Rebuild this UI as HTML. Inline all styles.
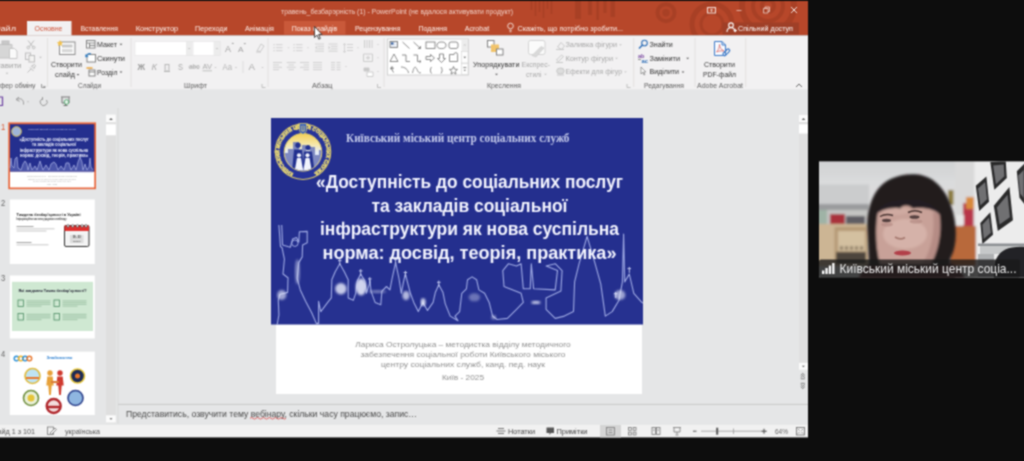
<!DOCTYPE html>
<html lang="uk"><head><meta charset="utf-8"><title>PowerPoint</title>
<style>
html,body{margin:0;padding:0;background:#0d0d0d;overflow:hidden}
svg{display:block;font-family:"Liberation Sans",sans-serif}
</style></head><body>
<svg width="1024" height="461" viewBox="0 0 1024 461">
<defs>
<filter id="soft" filterUnits="userSpaceOnUse" x="-20" y="-20" width="1064" height="501" color-interpolation-filters="sRGB"><feConvolveMatrix order="3" kernelMatrix="1 2 1 2 5 2 1 2 1" edgeMode="duplicate" preserveAlpha="true"/></filter>
<filter id="b1" x="-10%" y="-10%" width="120%" height="120%"><feGaussianBlur stdDeviation="1.2"/></filter>
<filter id="b2" x="-10%" y="-10%" width="120%" height="120%"><feGaussianBlur stdDeviation="2.5"/></filter>
<filter id="b05" x="-10%" y="-10%" width="120%" height="120%"><feGaussianBlur stdDeviation="0.5"/></filter>
<linearGradient id="wallg" x1="0" y1="0" x2="0" y2="1"><stop offset="0" stop-color="#cfd1d2"/><stop offset="0.350" stop-color="#dadbdc"/><stop offset="1" stop-color="#dedede"/></linearGradient>
<clipPath id="cam"><rect x="819" y="161.5" width="217" height="116"/></clipPath>
<clipPath id="win"><rect x="-12" y="0.8" width="820" height="436.800"/></clipPath>
<clipPath id="blue"><rect x="271" y="118" width="372" height="206.5"/></clipPath>
</defs>

<g filter="url(#soft)">
<rect x="-20.00" y="-20.00" width="1064.00" height="501.00" fill="#0d0d0d" />
<g clip-path="url(#win)">
<rect x="-12.00" y="1.00" width="820.00" height="34.50" fill="#b7472a" />
<g opacity="0.11" fill="none" stroke="#3a0d00">
<line x1="531.5" y1="1" x2="531.5" y2="10" stroke-width="1.600"/>
<line x1="535.5" y1="1" x2="535.5" y2="16" stroke-width="1.600"/>
<line x1="539.5" y1="1" x2="539.5" y2="12" stroke-width="1.600"/>
<line x1="543.5" y1="1" x2="543.5" y2="18" stroke-width="1.600"/>
<line x1="547.5" y1="1" x2="547.5" y2="9" stroke-width="1.600"/>
<line x1="551.5" y1="1" x2="551.5" y2="14" stroke-width="1.600"/>
<line x1="578" y1="1" x2="578" y2="19" stroke-width="6"/>
<line x1="590" y1="1" x2="590" y2="15" stroke-width="4"/>
<line x1="597.7" y1="1" x2="597.7" y2="20" stroke-width="2.6"/>
<line x1="605" y1="1" x2="605" y2="13" stroke-width="3"/>
<line x1="612.8" y1="1" x2="612.8" y2="17" stroke-width="4.4"/>
<circle cx="666" cy="12.700" r="8.500" stroke-width="4"/><circle cx="666" cy="12.700" r="2" stroke-width="3.500"/>
<circle cx="712" cy="24" r="20" stroke-width="5"/><circle cx="712" cy="24" r="11" stroke-width="3"/>
<circle cx="768" cy="6" r="26" stroke-width="6"/><circle cx="768" cy="6" r="15" stroke-width="4"/><circle cx="768" cy="6" r="6" stroke-width="4"/>
</g>
<text x="281.00" y="14.03" font-size="7.8" fill="#f0cfc5" textLength="232.00" lengthAdjust="spacingAndGlyphs" >травень_безбарэрність (1) - PowerPoint (не вдалося активувати продукт)</text>
<g stroke="#f6e3dd" fill="none" stroke-width="1">
<rect x="707.5" y="7.5" width="8" height="5.5"/><path d="M711.5 12v-3m-1.5 1.5l1.5-1.5l1.5 1.5" stroke-width="0.8"/>
<path d="M736.500 10.500h5" opacity="0.700"/>
<path d="M763.500 8.500h4.500v4.500h-4.500zM765 8.500v-1.500h4.500v4.500h-1.500" opacity="0.800" stroke-width="0.900"/>
<path d="M791 7l6 6m0-6l-6 6"/>
</g>
<rect x="27.00" y="21.00" width="44.50" height="14.50" fill="#f2f1f2" />
<rect x="284.00" y="21.00" width="61.50" height="13.50" fill="#c9593a" />
<rect x="722.50" y="22.50" width="76.50" height="12.00" fill="#9f3f27" />
<text x="-6.50" y="30.66" font-size="7.9" fill="#fdf1ec" textLength="22.50" lengthAdjust="spacingAndGlyphs" >Файл</text>
<text x="34.50" y="30.66" font-size="7.9" fill="#d0553a" textLength="28.00" lengthAdjust="spacingAndGlyphs" >Основне</text>
<text x="80.50" y="30.66" font-size="7.9" fill="#fdf1ec" textLength="37.50" lengthAdjust="spacingAndGlyphs" >Вставлення</text>
<text x="135.70" y="30.66" font-size="7.9" fill="#fdf1ec" textLength="42.50" lengthAdjust="spacingAndGlyphs" >Конструктор</text>
<text x="195.00" y="30.66" font-size="7.9" fill="#fdf1ec" textLength="32.50" lengthAdjust="spacingAndGlyphs" >Переходи</text>
<text x="245.00" y="30.66" font-size="7.9" fill="#fdf1ec" textLength="29.00" lengthAdjust="spacingAndGlyphs" >Анімація</text>
<text x="291.70" y="30.66" font-size="7.9" fill="#fdf1ec" textLength="45.50" lengthAdjust="spacingAndGlyphs" >Показ слайдів</text>
<text x="355.00" y="30.66" font-size="7.9" fill="#fdf1ec" textLength="45.50" lengthAdjust="spacingAndGlyphs" >Рецензування</text>
<text x="418.50" y="30.66" font-size="7.9" fill="#fdf1ec" textLength="28.50" lengthAdjust="spacingAndGlyphs" >Подання</text>
<text x="464.70" y="30.66" font-size="7.9" fill="#fdf1ec" textLength="24.50" lengthAdjust="spacingAndGlyphs" >Acrobat</text>
<g stroke="#f7e6e0" fill="none" stroke-width="0.9"><circle cx="510.5" cy="26" r="2.8"/><path d="M509.3 30.3h2.4M509.6 31.8h1.8"/></g>
<text x="517.50" y="30.66" font-size="7.9" fill="#fdf1ec" textLength="105.50" lengthAdjust="spacingAndGlyphs" >Скажіть, що потрібно зробити...</text>
<g stroke="#fff" fill="none" stroke-width="1.1"><circle cx="731" cy="25.2" r="2.3"/><path d="M727 32c0-3 1.8-4.3 4-4.3s4 1.3 4 4.300"/><path d="M733.5 30.500h3.5M735.2 28.800v3.400" stroke-width="0.9"/></g>
<text x="738.00" y="30.66" font-size="7.9" fill="#ffffff" textLength="55.00" lengthAdjust="spacingAndGlyphs" >Спільний доступ</text>
<rect x="-12.00" y="35.30" width="820.00" height="55.00" fill="#f2f1f2" />
<line x1="47.50" y1="38.00" x2="47.50" y2="87.00" stroke="#e1dfdd" stroke-width="0.9" />
<line x1="131.00" y1="38.00" x2="131.00" y2="87.00" stroke="#e1dfdd" stroke-width="0.9" />
<line x1="268.00" y1="38.00" x2="268.00" y2="87.00" stroke="#e1dfdd" stroke-width="0.9" />
<line x1="384.00" y1="38.00" x2="384.00" y2="87.00" stroke="#e1dfdd" stroke-width="0.9" />
<line x1="633.70" y1="38.00" x2="633.70" y2="87.00" stroke="#e1dfdd" stroke-width="0.9" />
<line x1="695.00" y1="38.00" x2="695.00" y2="87.00" stroke="#e1dfdd" stroke-width="0.9" />
<line x1="745.70" y1="38.00" x2="745.70" y2="87.00" stroke="#e1dfdd" stroke-width="0.9" />
<g fill="none" stroke="#bdbdbd" stroke-width="1">
<path d="M-2 44.5h14v13.500h-14z" fill="#d6d6d6" stroke="#c4c4c4"/><rect x="2" y="41" width="7" height="3.500" fill="#c9c9c9" stroke="#bdbdbd"/>
<path d="M9.500 48.500h5l2.500 2.500v7.500h-7.500z" fill="#fafafa" stroke="#c6c6c6"/>
<path d="M28 40.500l5 6.500M34 40.500l-5 6.500"/><circle cx="28.300" cy="47.500" r="1.300"/><circle cx="33.700" cy="47.500" r="1.300"/>
<rect x="25.500" y="53" width="5" height="6.500"/><rect x="29" y="55.500" width="5.500" height="6.500" fill="#f3f2f1"/>
<path d="M27.500 72.500l3.500-3.500M30 67.500l3.500 3.500M31.500 66l3-1.500l1 1l-1.500 3z" />
</g>
<path d="M39.10 56.80h2.80l-1.40 1.40z" fill="#bdbdbd" stroke="none" stroke-width="1" />
<text x="-12.50" y="67.69" font-size="7.7" fill="#a2a2a2" textLength="34.00" lengthAdjust="spacingAndGlyphs" >Вставити</text>
<path d="M5.60 72.80h2.80l-1.40 1.40z" fill="#bdbdbd" stroke="none" stroke-width="1" />
<text x="-8.00" y="87.59" font-size="7.7" fill="#5c5c5c" textLength="43.50" lengthAdjust="spacingAndGlyphs" >Буфер обміну</text>
<path d="M41.500 84v3.500h3.500M43 85.500l2 2v-1.600M45 87.500h-1.600" stroke="#777" fill="none" stroke-width="0.7"/>
<rect x="59.500" y="42" width="15.500" height="12.500" fill="#fdfdfd" stroke="#8a8a8a" stroke-width="1"/>
<rect x="62.00" y="44.50" width="10.50" height="3.00" fill="#c8c8c8" />
<rect x="62.00" y="49.00" width="10.50" height="3.30" fill="#d8d8d8" />
<path d="M60 38.500l1 2l2.200.3l-1.600 1.500l.4 2.200l-2-1.100l-2 1.100l.4-2.200l-1.600-1.500l2.200-.3z" fill="#f2c14e" transform="translate(0,1.500)"/>
<text x="66.50" y="67.09" font-size="7.7" fill="#363636" text-anchor="middle" textLength="31.00" lengthAdjust="spacingAndGlyphs" >Створити</text>
<text x="55.00" y="77.09" font-size="7.7" fill="#363636" textLength="20.00" lengthAdjust="spacingAndGlyphs" >слайд</text>
<path d="M76.60 74.10h2.80l-1.40 1.40z" fill="#555" stroke="none" stroke-width="1" />
<g fill="none" stroke="#777" stroke-width="0.9"><rect x="86.500" y="40.500" width="8.500" height="7.500" fill="#fff"/><path d="M86.500 43h8.500M89.500 43v5M89.500 45.500h5.500"/></g>
<text x="97.00" y="46.90" font-size="7.7" fill="#363636" textLength="20.00" lengthAdjust="spacingAndGlyphs" >Макет</text>
<path d="M119.60 43.80h2.80l-1.40 1.40z" fill="#555" stroke="none" stroke-width="1" />
<g fill="none" stroke="#777" stroke-width="0.9"><rect x="87" y="54.500" width="8.500" height="7.500" fill="#fff"/><path d="M86 57a3.500 3.500 0 0 1 5-3" stroke="#2b7bc4" stroke-width="1.200"/><path d="M85.200 54.200l.5 3.200l3-.8z" fill="#2b7bc4" stroke="none"/></g>
<text x="97.00" y="60.70" font-size="7.7" fill="#363636" textLength="28.00" lengthAdjust="spacingAndGlyphs" >Скинути</text>
<g fill="none" stroke="#777" stroke-width="0.9"><rect x="89" y="70" width="6" height="6" fill="#fff"/><path d="M89 72h6"/><path d="M86.500 68h6" stroke="#e8a33a" stroke-width="1.500"/></g>
<text x="97.00" y="74.69" font-size="7.7" fill="#363636" textLength="20.50" lengthAdjust="spacingAndGlyphs" >Розділ</text>
<path d="M119.60 71.60h2.80l-1.40 1.40z" fill="#555" stroke="none" stroke-width="1" />
<text x="78.00" y="87.59" font-size="7.7" fill="#5c5c5c" textLength="23.00" lengthAdjust="spacingAndGlyphs" >Слайди</text>
<rect x="135.00" y="41.50" width="51.00" height="14.00" fill="#ffffff" />
<rect x="186.00" y="41.50" width="6.50" height="14.00" fill="#ececec" />
<path d="M187.90 48.05h2.60l-1.30 1.30z" fill="#c0c0c0" stroke="none" stroke-width="1" />
<rect x="193.70" y="41.50" width="20.00" height="14.00" fill="#ffffff" />
<rect x="213.70" y="41.50" width="6.50" height="14.00" fill="#ececec" />
<path d="M215.70 48.05h2.60l-1.30 1.30z" fill="#c0c0c0" stroke="none" stroke-width="1" />
<rect x="135" y="41.500" width="85.200" height="14" fill="none" stroke="#e3e3e3" stroke-width="0.6"/>
<text x="225.00" y="51.65" font-size="9" fill="#a2a2a2" textLength="6.00" lengthAdjust="spacingAndGlyphs" >A</text>
<path d="M231.5 44l1.300-1.500l1.300 1.500z" fill="#a2a2a2" stroke="none" stroke-width="1" />
<text x="238.00" y="51.80" font-size="8" fill="#a2a2a2" textLength="5.50" lengthAdjust="spacingAndGlyphs" >A</text>
<path d="M243.500 43l1.300 1.500l1.300-1.500z" fill="#a2a2a2" stroke="none" stroke-width="1" />
<path d="M257 51l4-7l3 2l-3.500 5.500zM256 52h5" stroke="#c6c6c6" fill="none" stroke-width="0.9"/>
<text x="137.50" y="69.77" font-size="8.5" fill="#999" font-weight="bold" textLength="7.50" lengthAdjust="spacingAndGlyphs" >Ж</text>
<text x="151.50" y="69.77" font-size="8.5" fill="#aaa" textLength="5.50" lengthAdjust="spacingAndGlyphs" font-style="italic" >К</text>
<text x="164.00" y="69.77" font-size="8.5" fill="#aaa" textLength="6.00" lengthAdjust="spacingAndGlyphs" text-decoration="underline">П</text>
<line x1="164.00" y1="71.30" x2="170.00" y2="71.30" stroke="#aaa" stroke-width="0.8" />
<text x="178.00" y="69.77" font-size="8.5" fill="#aaa" textLength="5.00" lengthAdjust="spacingAndGlyphs" >S</text>
<text x="189.00" y="69.42" font-size="7.5" fill="#aaa" textLength="10.50" lengthAdjust="spacingAndGlyphs" >abc</text>
<line x1="188.50" y1="67.00" x2="200.00" y2="67.00" stroke="#aaa" stroke-width="0.7" />
<text x="202.50" y="68.62" font-size="7.5" fill="#aaa" textLength="9.50" lengthAdjust="spacingAndGlyphs" >AV</text>
<line x1="202.50" y1="70.80" x2="212.00" y2="70.80" stroke="#aaa" stroke-width="0.7" />
<path d="M214.30 66.90h2.40l-1.20 1.20z" fill="#bbb" stroke="none" stroke-width="1" />
<text x="222.50" y="69.77" font-size="8.5" fill="#b4b4b4" textLength="9.50" lengthAdjust="spacingAndGlyphs" >Aa</text>
<path d="M234.80 66.90h2.40l-1.20 1.20z" fill="#bbb" stroke="none" stroke-width="1" />
<line x1="243.00" y1="61.00" x2="243.00" y2="73.00" stroke="#dcdcdc" stroke-width="1" />
<text x="248.50" y="69.95" font-size="9" fill="#aaa" textLength="6.50" lengthAdjust="spacingAndGlyphs" >A</text>
<path d="M261.30 66.90h2.40l-1.20 1.20z" fill="#bbb" stroke="none" stroke-width="1" />
<text x="184.00" y="87.59" font-size="7.7" fill="#5c5c5c" textLength="23.00" lengthAdjust="spacingAndGlyphs" >Шрифт</text>
<path d="M262 84v3.500h3.500" stroke="#aaa" fill="none" stroke-width="0.7"/>
<rect x="273.50" y="44.10" width="1.20" height="1.20" fill="#cdcdcd" />
<line x1="276.00" y1="44.70" x2="282.50" y2="44.70" stroke="#cdcdcd" stroke-width="0.9" />
<rect x="273.50" y="47.10" width="1.20" height="1.20" fill="#cdcdcd" />
<line x1="276.00" y1="47.70" x2="282.50" y2="47.70" stroke="#cdcdcd" stroke-width="0.9" />
<rect x="273.50" y="50.10" width="1.20" height="1.20" fill="#cdcdcd" />
<line x1="276.00" y1="50.70" x2="282.50" y2="50.70" stroke="#cdcdcd" stroke-width="0.9" />
<path d="M287.30 47.40h2.40l-1.20 1.20z" fill="#ccc" stroke="none" stroke-width="1" />
<rect x="293.50" y="44.10" width="1.20" height="1.20" fill="#cdcdcd" />
<line x1="296.00" y1="44.70" x2="302.50" y2="44.70" stroke="#cdcdcd" stroke-width="0.9" />
<rect x="293.50" y="47.10" width="1.20" height="1.20" fill="#cdcdcd" />
<line x1="296.00" y1="47.70" x2="302.50" y2="47.70" stroke="#cdcdcd" stroke-width="0.9" />
<rect x="293.50" y="50.10" width="1.20" height="1.20" fill="#cdcdcd" />
<line x1="296.00" y1="50.70" x2="302.50" y2="50.70" stroke="#cdcdcd" stroke-width="0.9" />
<path d="M306.80 47.40h2.40l-1.20 1.20z" fill="#ccc" stroke="none" stroke-width="1" />
<line x1="315.00" y1="44.00" x2="324.00" y2="44.00" stroke="#cdcdcd" stroke-width="0.9" />
<line x1="315.00" y1="46.40" x2="324.00" y2="46.40" stroke="#cdcdcd" stroke-width="0.9" />
<line x1="315.00" y1="48.80" x2="324.00" y2="48.80" stroke="#cdcdcd" stroke-width="0.9" />
<line x1="315.00" y1="51.20" x2="324.00" y2="51.20" stroke="#cdcdcd" stroke-width="0.9" />
<rect x="315.00" y="45.50" width="2.50" height="3.50" fill="#f2f1f2" />
<path d="M317 46l-2 1.500l2 1.500z" fill="#cdcdcd" stroke="none" stroke-width="1" />
<line x1="328.50" y1="44.00" x2="337.50" y2="44.00" stroke="#cdcdcd" stroke-width="0.9" />
<line x1="328.50" y1="46.40" x2="337.50" y2="46.40" stroke="#cdcdcd" stroke-width="0.9" />
<line x1="328.50" y1="48.80" x2="337.50" y2="48.80" stroke="#cdcdcd" stroke-width="0.9" />
<line x1="328.50" y1="51.20" x2="337.50" y2="51.20" stroke="#cdcdcd" stroke-width="0.9" />
<rect x="328.50" y="45.50" width="2.50" height="3.50" fill="#f2f1f2" />
<path d="M328.5 46l2 1.500l-2 1.500z" fill="#cdcdcd" stroke="none" stroke-width="1" />
<line x1="347.00" y1="44.50" x2="353.00" y2="44.50" stroke="#cdcdcd" stroke-width="0.9" />
<line x1="347.00" y1="47.50" x2="353.00" y2="47.50" stroke="#cdcdcd" stroke-width="0.9" />
<line x1="347.00" y1="50.50" x2="353.00" y2="50.50" stroke="#cdcdcd" stroke-width="0.9" />
<path d="M344.500 43.500v9M343 45l1.500-1.500l1.500 1.500M343 51l1.500 1.500l1.500-1.500" fill="none" stroke="#cdcdcd" stroke-width="0.8" />
<path d="M356.80 47.40h2.40l-1.20 1.20z" fill="#ccc" stroke="none" stroke-width="1" />
<g stroke="#c8c8c8" fill="none" stroke-width="0.9"><path d="M364.500 40v8M367 40v8M369.500 40v8M372 40v8"/><path d="M363.500 54h9v7.500h-9zM366 57.800h4M368 55.800v4"/><path d="M364 68h5v3h-5z" fill="#c9c9c9"/><path d="M367 72h6v4.500h-6z" fill="#fff"/></g>
<path d="M376.80 43.90h2.40l-1.20 1.20z" fill="#ccc" stroke="none" stroke-width="1" />
<path d="M376.80 57.40h2.40l-1.20 1.20z" fill="#ccc" stroke="none" stroke-width="1" />
<path d="M376.80 70.90h2.40l-1.20 1.20z" fill="#ccc" stroke="none" stroke-width="1" />
<line x1="273.00" y1="62.50" x2="282.00" y2="62.50" stroke="#cdcdcd" stroke-width="0.9" />
<line x1="273.00" y1="64.90" x2="279.00" y2="64.90" stroke="#cdcdcd" stroke-width="0.9" />
<line x1="273.00" y1="67.30" x2="282.00" y2="67.30" stroke="#cdcdcd" stroke-width="0.9" />
<line x1="273.00" y1="69.70" x2="279.00" y2="69.70" stroke="#cdcdcd" stroke-width="0.9" />
<line x1="286.70" y1="62.50" x2="295.70" y2="62.50" stroke="#cdcdcd" stroke-width="0.9" />
<line x1="300.00" y1="62.50" x2="309.00" y2="62.50" stroke="#cdcdcd" stroke-width="0.9" />
<line x1="288.45" y1="64.90" x2="293.95" y2="64.90" stroke="#cdcdcd" stroke-width="0.9" />
<line x1="303.50" y1="64.90" x2="309.00" y2="64.90" stroke="#cdcdcd" stroke-width="0.9" />
<line x1="286.70" y1="67.30" x2="295.70" y2="67.30" stroke="#cdcdcd" stroke-width="0.9" />
<line x1="300.00" y1="67.30" x2="309.00" y2="67.30" stroke="#cdcdcd" stroke-width="0.9" />
<line x1="288.45" y1="69.70" x2="293.95" y2="69.70" stroke="#cdcdcd" stroke-width="0.9" />
<line x1="303.50" y1="69.70" x2="309.00" y2="69.70" stroke="#cdcdcd" stroke-width="0.9" />
<line x1="313.00" y1="62.50" x2="322.00" y2="62.50" stroke="#cdcdcd" stroke-width="0.9" />
<line x1="313.00" y1="64.90" x2="322.00" y2="64.90" stroke="#cdcdcd" stroke-width="0.9" />
<line x1="313.00" y1="67.30" x2="322.00" y2="67.30" stroke="#cdcdcd" stroke-width="0.9" />
<line x1="313.00" y1="69.70" x2="322.00" y2="69.70" stroke="#cdcdcd" stroke-width="0.9" />
<line x1="331.00" y1="62.50" x2="335.00" y2="62.50" stroke="#cdcdcd" stroke-width="0.9" />
<line x1="331.00" y1="64.90" x2="335.00" y2="64.90" stroke="#cdcdcd" stroke-width="0.9" />
<line x1="331.00" y1="67.30" x2="335.00" y2="67.30" stroke="#cdcdcd" stroke-width="0.9" />
<line x1="331.00" y1="69.70" x2="335.00" y2="69.70" stroke="#cdcdcd" stroke-width="0.9" />
<line x1="336.50" y1="62.50" x2="340.50" y2="62.50" stroke="#cdcdcd" stroke-width="0.9" />
<line x1="336.50" y1="64.90" x2="340.50" y2="64.90" stroke="#cdcdcd" stroke-width="0.9" />
<line x1="336.50" y1="67.30" x2="340.50" y2="67.30" stroke="#cdcdcd" stroke-width="0.9" />
<line x1="336.50" y1="69.70" x2="340.50" y2="69.70" stroke="#cdcdcd" stroke-width="0.9" />
<path d="M344.80 65.90h2.40l-1.20 1.20z" fill="#ccc" stroke="none" stroke-width="1" />
<text x="312.00" y="87.59" font-size="7.7" fill="#5c5c5c" textLength="20.50" lengthAdjust="spacingAndGlyphs" >Абзац</text>
<path d="M377.500 84v3.500h3.500" stroke="#aaa" fill="none" stroke-width="0.7"/>
<rect x="387.500" y="39" width="81" height="36" fill="#ffffff" stroke="#c9c9c9" stroke-width="0.8"/>
<rect x="461.50" y="39.40" width="6.60" height="11.50" fill="#ececec" />
<rect x="461.500" y="51.500" width="6.600" height="11.500" fill="#fdfdfd" stroke="#d0d0d0" stroke-width="0.6"/><rect x="461.500" y="63.500" width="6.600" height="11" fill="#fdfdfd" stroke="#d0d0d0" stroke-width="0.6"/>
<path d="M463.300 45.500l1.500-1.500l1.500 1.500z" fill="#c9c9c9" stroke="none" stroke-width="1" />
<path d="M463.50 56.85h2.60l-1.30 1.30z" fill="#555" stroke="none" stroke-width="1" />
<path d="M463.50 69.65h2.60l-1.30 1.30z" fill="#555" stroke="none" stroke-width="1" />
<line x1="463.30" y1="67.50" x2="466.30" y2="67.50" stroke="#555" stroke-width="0.7" />
<g stroke="#707070" fill="none" stroke-width="0.8">
<rect x="390" y="41.500" width="7.500" height="6" fill="#e9eef6" stroke="#666"/><rect x="391" y="42.500" width="2.500" height="2" fill="#2b579a" stroke="none"/>
<path d="M402.500 42l7 6.500"/><path d="M413.500 42l7 6.500M420.500 48.500v-2.500M420.500 48.500h-2.500"/>
<rect x="426" y="42" width="9" height="6.500"/><ellipse cx="441.500" cy="45.300" rx="4.500" ry="3.300"/><rect x="449" y="42" width="9" height="6.500" rx="2"/>
<path d="M394 54l4 7.500h-8z"/><path d="M402 55h4v6.500h4"/><path d="M413.500 55h4v6.500h3.500M421 61.500l-1.500-1.300M421 61.500l-1.500 1.300"/>
<path d="M426 56.500h4.500v-2l4 3.500l-4 3.500v-2h-4.500z"/><path d="M439.500 54h4v4.500h2l-4 4l-4-4h2z"/><path d="M449.500 54.500h4.500a1.800 1.800 0 0 1 3.600 0v7h-8.100z"/>
<path d="M391 67.500l2.500 5M392 66.500l-1.500 2.500l3-.5z"/><path d="M401 67c4 0 7 2.500 7.500 6"/><path d="M412.500 73c1.500-7 3-7 4.500-3.500s2.500 3.800 4 3"/><path d="M431.500 67c-1.500 2-1.500 4.500 0 6.500"/><path d="M441 67c1.500 2 1.500 4.500 0 6.500"/>
<path d="M453.500 66.500l1.100 2.700l2.900.2l-2.200 1.900l.7 2.800l-2.500-1.500l-2.500 1.500l.7-2.800l-2.200-1.900l2.900-.2z"/>
</g>
<rect x="487.500" y="40.500" width="6.500" height="6.500" fill="#fff" stroke="#777" stroke-width="0.9"/><rect x="491" y="44.500" width="8" height="7.500" fill="#f2c46b"/><rect x="496.500" y="49" width="6.500" height="6" fill="#fff" stroke="#777" stroke-width="0.9"/>
<text x="473.00" y="67.19" font-size="7.7" fill="#363636" textLength="46.50" lengthAdjust="spacingAndGlyphs" >Упорядкувати</text>
<path d="M495.10 73.80h2.80l-1.40 1.40z" fill="#555" stroke="none" stroke-width="1" />
<text x="487.00" y="87.59" font-size="7.7" fill="#5c5c5c" textLength="34.00" lengthAdjust="spacingAndGlyphs" >Креслення</text>
<rect x="528.500" y="40.500" width="16.500" height="14" rx="2" fill="#fbfbfb" stroke="#cfcfcf" stroke-width="0.9"/><path d="M532 55.500l9-9l3 1.500l-8 9z" fill="#d9d9d9" stroke="#c9c9c9" stroke-width="0.6"/>
<text x="521.50" y="67.19" font-size="7.7" fill="#a8a8a8" textLength="28.50" lengthAdjust="spacingAndGlyphs" >Експрес-</text>
<text x="526.00" y="76.69" font-size="7.7" fill="#a8a8a8" textLength="15.50" lengthAdjust="spacingAndGlyphs" >стилі</text>
<path d="M544.20 73.85h2.60l-1.30 1.30z" fill="#c0c0c0" stroke="none" stroke-width="1" />
<g stroke="#c4c4c4" fill="none" stroke-width="0.9"><path d="M557.500 47l3.500-4.500l3.500 3.500l-3 3.500zM556 49.500h8"/><path d="M556.500 60l5-5l2 1.500l-5 5zM556 62.500h7"/><ellipse cx="560.500" cy="71" rx="3.800" ry="3" fill="#ddd"/><path d="M557 75h7"/></g>
<text x="565.50" y="47.20" font-size="7.7" fill="#a8a8a8" textLength="51.50" lengthAdjust="spacingAndGlyphs" >Заливка фігури</text>
<path d="M619.20 44.35h2.60l-1.30 1.30z" fill="#c0c0c0" stroke="none" stroke-width="1" />
<text x="565.50" y="60.70" font-size="7.7" fill="#a8a8a8" textLength="47.50" lengthAdjust="spacingAndGlyphs" >Контур фігури</text>
<path d="M615.20 57.85h2.60l-1.30 1.30z" fill="#c0c0c0" stroke="none" stroke-width="1" />
<text x="565.50" y="74.39" font-size="7.7" fill="#a8a8a8" textLength="56.50" lengthAdjust="spacingAndGlyphs" >Ефекти для фігур</text>
<path d="M624.20 71.55h2.60l-1.30 1.30z" fill="#c0c0c0" stroke="none" stroke-width="1" />
<path d="M627 84v3.500h3.500" stroke="#aaa" fill="none" stroke-width="0.7"/>
<g fill="none" stroke-width="1.100"><circle cx="644.500" cy="43" r="2.800" stroke="#2b6cb5"/><path d="M642.500 45l-3.500 3.500" stroke="#2b6cb5" stroke-width="1.400"/></g>
<text x="649.50" y="47.20" font-size="7.7" fill="#2e2e2e" textLength="23.20" lengthAdjust="spacingAndGlyphs" >Знайти</text>
<text x="638.00" y="58.10" font-size="6" fill="#7a4aa0" font-weight="bold" textLength="6.50" lengthAdjust="spacingAndGlyphs" >ab</text>
<text x="641.50" y="63.10" font-size="6" fill="#2b6cb5" font-weight="bold" textLength="6.50" lengthAdjust="spacingAndGlyphs" >ac</text>
<path d="M638 59.500h3" fill="none" stroke="#666" stroke-width="0.7" />
<text x="649.50" y="60.70" font-size="7.7" fill="#2e2e2e" textLength="30.50" lengthAdjust="spacingAndGlyphs" >Замінити</text>
<path d="M686.30 57.80h2.80l-1.40 1.40z" fill="#555" stroke="none" stroke-width="1" />
<path d="M641 67v7l1.700-1.600l1.300 2.600l.9-.4l-1.300-2.600h2.200z" fill="#fff" stroke="#777" stroke-width="0.7" />
<text x="649.50" y="74.39" font-size="7.7" fill="#2e2e2e" textLength="29.50" lengthAdjust="spacingAndGlyphs" >Виділити</text>
<path d="M681.60 71.50h2.80l-1.40 1.40z" fill="#555" stroke="none" stroke-width="1" />
<text x="644.00" y="87.59" font-size="7.7" fill="#5c5c5c" textLength="40.00" lengthAdjust="spacingAndGlyphs" >Редагування</text>
<g fill="none" stroke="#3b78c6" stroke-width="1"><path d="M714.500 41.500h7.500l3.500 3.500v10.500h-11z" fill="#f7faff"/><path d="M722 41.500v3.500h3.500" /><path d="M716.500 52c2-2 3-5 3-7.500c0 3 2 5.500 4.500 6.500c-3-.3-5.500 0-7.500 1z" stroke="#d9534f" stroke-width="0.700"/><path d="M724 52.500l3-3a1.500 1.500 0 0 1 2.200 2.200l-3.500 3.500a1.500 1.500 0 0 1-2.200-2.200z" stroke-width="1.200"/></g>
<text x="719.50" y="67.19" font-size="7.7" fill="#363636" text-anchor="middle" textLength="31.00" lengthAdjust="spacingAndGlyphs" >Створити</text>
<text x="719.50" y="76.89" font-size="7.7" fill="#363636" text-anchor="middle" textLength="33.00" lengthAdjust="spacingAndGlyphs" >PDF-файл</text>
<text x="697.00" y="87.59" font-size="7.7" fill="#5c5c5c" textLength="46.00" lengthAdjust="spacingAndGlyphs" >Adobe Acrobat</text>
<path d="M796 87l3-3l3 3" fill="none" stroke="#666" stroke-width="1" />
<rect x="-12.00" y="89.30" width="820.00" height="336.00" fill="#e5e6e7" />
<g fill="none" stroke="#8a8a8a" stroke-width="1">
<path d="M-3 97h5.500v8.500h-5.500z" stroke="#6a3fa0" stroke-width="1.200"/>
<path d="M16 99.500c5-2 8 0 7.500 5M16 99.500l3-2.500M16 99.500l3.500 1.800" stroke="#9a9a9a"/>
<path d="M46.500 100a3.500 3.500 0 1 1-4.500-1M42.500 97v3" stroke="#9a9a9a"/>
<path d="M61 97h9M62 97.500v5.500h7v-5.500M65.500 103v2.500M63.500 105.500h4" stroke="#666" stroke-width="0.9"/><circle cx="66.500" cy="102" r="2.300" stroke="#3a9a5a" fill="#e6f4ea" stroke-width="0.8"/>
</g>
<path d="M26.80 101.40h2.40l-1.20 1.20z" fill="#aaa" stroke="none" stroke-width="1" />
<rect x="106.00" y="114.50" width="10.00" height="309.00" fill="#dfdfdf" />
<line x1="118.00" y1="108.00" x2="118.00" y2="424.00" stroke="#d6d6d6" stroke-width="0.8" />
<rect x="106.00" y="114.50" width="9.80" height="7.70" fill="#fbfbfb" />
<path d="M109.200 120l1.800-2l1.800 2z" fill="#555" stroke="none" stroke-width="1" />
<rect x="106.00" y="124.30" width="9.80" height="11.00" fill="#ffffff" />
<rect x="106.00" y="415.30" width="9.80" height="7.20" fill="#fbfbfb" />
<path d="M109.50 418.25h3.00l-1.50 1.50z" fill="#555" stroke="none" stroke-width="1" />
<rect x="8.30" y="122.40" width="87.70" height="66.80" fill="#e8653a" />
<rect x="10.00" y="124.20" width="84.30" height="47.60" fill="#242f8e" />
<rect x="10.00" y="171.80" width="84.30" height="15.70" fill="#ffffff" />
<circle cx="16.500" cy="131.500" r="4.800" fill="#9fb4d8" stroke="#d9c25a" stroke-width="1"/>
<text x="52.00" y="129.77" font-size="2.2" fill="#c9cfee" text-anchor="middle" textLength="48.00" lengthAdjust="spacingAndGlyphs" >Київський міський центр соціальних служб</text>
<text x="54.00" y="140.91" font-size="4.6" fill="#f0f2ff" font-weight="bold" text-anchor="middle" textLength="69.00" lengthAdjust="spacingAndGlyphs" >«Доступність до соціальних послуг</text>
<text x="54.00" y="146.36" font-size="4.6" fill="#f0f2ff" font-weight="bold" text-anchor="middle" textLength="44.00" lengthAdjust="spacingAndGlyphs" >та закладів соціальної</text>
<text x="54.00" y="151.81" font-size="4.6" fill="#f0f2ff" font-weight="bold" text-anchor="middle" textLength="68.00" lengthAdjust="spacingAndGlyphs" >інфраструктури як нова суспільна</text>
<text x="54.00" y="157.26" font-size="4.6" fill="#f0f2ff" font-weight="bold" text-anchor="middle" textLength="68.00" lengthAdjust="spacingAndGlyphs" >норма: досвід, теорія, практика»</text>
<path d="M10 171.500v-6l1-8l1 8l2 2l1-9l2-2l1 11l3 2l2-6l2-3l2 3l1 6l2-7l2 7l3-4l2 4l2-6l1-3l1 3l2 6l3-5l3 5l2-6l3-2l2 2l2 6l3-4l3 4l2-7l3 0l2 7l3-5l2 5l2-8l2-5l2 5l1 8l2-6l2 6l2-3l1-9l1 9l2 3v3.500z" fill="#9aa6e4" stroke="none" stroke-width="1" opacity="0.330"/>
<path d="M10 168l1-10l1 8l2 2l1-9l2-2l1 11l3 2l2-6l2-3l2 3l1 6l2-7l2 7l3-4l2 4l2-6l1-3l1 3l2 6l3-5l3 5l2-6l3-2l2 2l2 6l3-4l3 4l2-7l3 0l2 7l3-5l2 5l2-8l2-5l2 5l1 8l2-6l2 6l2-3l1-9l1 9l2 3" fill="none" stroke="#b7c0ee" stroke-width="0.7" opacity="0.900"/>
<text x="52.00" y="177.16" font-size="1.9" fill="#aaa" text-anchor="middle" textLength="50.00" lengthAdjust="spacingAndGlyphs" >Лариса Остролуцька – методистка відділу методичного</text>
<text x="52.00" y="179.66" font-size="1.9" fill="#aaa" text-anchor="middle" textLength="48.00" lengthAdjust="spacingAndGlyphs" >забезпечення соціальної роботи Київського міського</text>
<text x="52.00" y="182.16" font-size="1.9" fill="#aaa" text-anchor="middle" textLength="38.00" lengthAdjust="spacingAndGlyphs" >центру соціальних служб, канд. пед. наук</text>
<text x="52.00" y="184.86" font-size="1.9" fill="#aaa" text-anchor="middle" textLength="10.00" lengthAdjust="spacingAndGlyphs" >Київ - 2025</text>
<text x="5.10" y="130.10" font-size="8.3" fill="#d9532c" text-anchor="end" textLength="4.20" lengthAdjust="spacingAndGlyphs" >1</text>
<rect x="9.80" y="199.50" width="85.00" height="64.50" fill="#ffffff" />
<text x="16.50" y="215.76" font-size="3.6" fill="#222" font-weight="bold" textLength="64.00" lengthAdjust="spacingAndGlyphs" >Тиждень безбар'єрності в Україні</text>
<text x="16.50" y="219.71" font-size="2.6" fill="#444" font-weight="bold" textLength="50.00" lengthAdjust="spacingAndGlyphs" >Інформаційна частина урядового вебінару</text>
<line x1="16.50" y1="226.50" x2="33.50" y2="226.50" stroke="#888" stroke-width="0.8" />
<line x1="16.50" y1="228.80" x2="54.50" y2="228.80" stroke="#bbb" stroke-width="0.8" />
<line x1="16.50" y1="231.00" x2="46.50" y2="231.00" stroke="#bbb" stroke-width="0.8" />
<line x1="16.50" y1="242.50" x2="31.50" y2="242.50" stroke="#888" stroke-width="0.8" />
<line x1="16.50" y1="244.80" x2="48.50" y2="244.80" stroke="#bbb" stroke-width="0.8" />
<rect x="64.500" y="225.500" width="24.500" height="21" rx="1.500" fill="#f4f4f4" stroke="#2a2a2a" stroke-width="1"/>
<rect x="64.50" y="225.50" width="24.50" height="5.50" fill="#e0312f" />
<circle cx="68" cy="226" r="1.300" fill="#fff" stroke="#2a2a2a" stroke-width="0.600"/>
<circle cx="72.7" cy="226" r="1.300" fill="#fff" stroke="#2a2a2a" stroke-width="0.600"/>
<circle cx="77.4" cy="226" r="1.300" fill="#fff" stroke="#2a2a2a" stroke-width="0.600"/>
<circle cx="82.1" cy="226" r="1.300" fill="#fff" stroke="#2a2a2a" stroke-width="0.600"/>
<circle cx="86" cy="226" r="1.300" fill="#fff" stroke="#2a2a2a" stroke-width="0.600"/>
<rect x="70.00" y="235.00" width="13.50" height="8.00" fill="#dcdcdc" />
<text x="76.70" y="238.41" font-size="2.6" fill="#333" font-weight="bold" text-anchor="middle" >19 - 23</text>
<text x="76.70" y="241.84" font-size="2.4" fill="#333" text-anchor="middle" >травня</text>
<text x="5.10" y="206.10" font-size="8.3" fill="#666" text-anchor="end" textLength="4.20" lengthAdjust="spacingAndGlyphs" >2</text>
<rect x="9.80" y="275.50" width="85.00" height="63.00" fill="#ffffff" />
<rect x="12.00" y="281.80" width="81.00" height="49.20" fill="#cfe8d2" />
<text x="18.50" y="292.39" font-size="3.4" fill="#223" font-weight="bold" textLength="68.00" lengthAdjust="spacingAndGlyphs" >Які завдання Тижня безбар'єрності?</text>
<rect x="18" y="300" width="5.500" height="6.500" fill="none" stroke="#4a8a62" stroke-width="0.800"/>
<line x1="26.50" y1="300.80" x2="50.50" y2="300.80" stroke="#8fb89a" stroke-width="0.7" />
<line x1="26.50" y1="302.60" x2="50.50" y2="302.60" stroke="#8fb89a" stroke-width="0.7" />
<line x1="26.50" y1="304.40" x2="50.50" y2="304.40" stroke="#8fb89a" stroke-width="0.7" />
<line x1="26.50" y1="306.20" x2="41.50" y2="306.20" stroke="#8fb89a" stroke-width="0.7" />
<rect x="54" y="300" width="5.500" height="6.500" fill="none" stroke="#4a8a62" stroke-width="0.800"/>
<line x1="62.50" y1="300.80" x2="86.50" y2="300.80" stroke="#8fb89a" stroke-width="0.7" />
<line x1="62.50" y1="302.60" x2="86.50" y2="302.60" stroke="#8fb89a" stroke-width="0.7" />
<line x1="62.50" y1="304.40" x2="86.50" y2="304.40" stroke="#8fb89a" stroke-width="0.7" />
<line x1="62.50" y1="306.20" x2="77.50" y2="306.20" stroke="#8fb89a" stroke-width="0.7" />
<rect x="18" y="313.5" width="5.500" height="6.500" fill="none" stroke="#4a8a62" stroke-width="0.800"/>
<line x1="26.50" y1="314.30" x2="50.50" y2="314.30" stroke="#8fb89a" stroke-width="0.7" />
<line x1="26.50" y1="316.10" x2="50.50" y2="316.10" stroke="#8fb89a" stroke-width="0.7" />
<line x1="26.50" y1="317.90" x2="50.50" y2="317.90" stroke="#8fb89a" stroke-width="0.7" />
<line x1="26.50" y1="319.70" x2="41.50" y2="319.70" stroke="#8fb89a" stroke-width="0.7" />
<rect x="54" y="313.5" width="5.500" height="6.500" fill="none" stroke="#4a8a62" stroke-width="0.800"/>
<line x1="62.50" y1="314.30" x2="86.50" y2="314.30" stroke="#8fb89a" stroke-width="0.7" />
<line x1="62.50" y1="316.10" x2="86.50" y2="316.10" stroke="#8fb89a" stroke-width="0.7" />
<line x1="62.50" y1="317.90" x2="86.50" y2="317.90" stroke="#8fb89a" stroke-width="0.7" />
<line x1="62.50" y1="319.70" x2="77.50" y2="319.70" stroke="#8fb89a" stroke-width="0.7" />
<text x="5.10" y="280.70" font-size="8.3" fill="#666" text-anchor="end" textLength="4.20" lengthAdjust="spacingAndGlyphs" >3</text>
<rect x="9.80" y="351.60" width="85.00" height="63.40" fill="#ffffff" />
<circle cx="16.5" cy="358.500" r="2.300" fill="none" stroke="#2b8fd6" stroke-width="1.400"/>
<circle cx="20.8" cy="358.500" r="2.300" fill="none" stroke="#f0b429" stroke-width="1.400"/>
<circle cx="25.1" cy="358.500" r="2.300" fill="none" stroke="#2b8fd6" stroke-width="1.400"/>
<circle cx="29.4" cy="358.500" r="2.300" fill="none" stroke="#e8762c" stroke-width="1.400"/>
<text x="46.50" y="359.42" font-size="3.2" fill="#2b7fd0" font-weight="bold" textLength="26.00" lengthAdjust="spacingAndGlyphs" >Знайомство</text>
<circle cx="32.500" cy="376" r="7.500" fill="#bfe3f2" stroke="#e0b93a" stroke-width="1.600"/><path d="M26 378h13" stroke="#e8762c" stroke-width="2"/>
<circle cx="77.500" cy="376" r="7" fill="#1d2b55" stroke="#e6c53a" stroke-width="1.600"/><circle cx="77.500" cy="376" r="2.500" fill="#e8762c"/>
<circle cx="31" cy="398" r="7.500" fill="#e9f0d8" stroke="#6d8c3a" stroke-width="1.600"/><circle cx="31" cy="398" r="3.500" fill="#e6c53a"/>
<circle cx="75.500" cy="398" r="7.500" fill="#8fb6e0" stroke="#2b3f8a" stroke-width="1.600"/>
<circle cx="53.700" cy="406" r="7" fill="#f3dede" stroke="#b0282d" stroke-width="2.400"/><path d="M47.500 407h12.500" stroke="#b0282d" stroke-width="2.500"/>
<g><circle cx="50" cy="373" r="2.700" fill="#e7a13a"/><path d="M47.300 376.500h5.400l1 9h-2l-.8 9.500h-1.800l-.8-9.500h-2z" fill="#e7a13a"/><circle cx="60" cy="373" r="2.700" fill="#cf3a2f"/><path d="M57.300 376.500h5.400l1 9h-2l-.8 9.500h-1.800l-.8-9.500h-2z" fill="#cf3a2f"/><path d="M51 382h8" stroke="#d97b39" stroke-width="2"/></g>
<text x="5.10" y="357.10" font-size="8.3" fill="#666" text-anchor="end" textLength="4.20" lengthAdjust="spacingAndGlyphs" >4</text>
<rect x="276.00" y="118.00" width="366.00" height="276.00" fill="#ffffff" />
<rect x="271.00" y="118.00" width="372.00" height="206.50" fill="#242f8e" />
<g clip-path="url(#blue)">
<path d="M271.0 326.0 L271.0 300.0 L297.2 278.5 L300.3 289.9 L305.6 301.3 L311.7 312.7 L316.3 323.4 L318.6 323.4 L318.6 301.3 L320.8 311.6 L327.7 302.4 L331.3 297.9 L331.8 279.7 L335.2 271.7 L339.8 263.7 L344.3 271.7 L348.2 279.7 L348.2 297.9 L353.4 300.2 L355.7 293.3 L357.3 280.8 L360.7 274.0 L364.8 280.8 L366.4 293.3 L369.4 284.2 L369.8 279.7 L371.0 291.1 L375.1 302.4 L380.8 304.7 L381.9 291.1 L386.5 286.5 L389.9 289.9 L392.1 278.5 L395.6 262.6 L399.0 278.5 L401.3 293.3 L403.5 281.9 L405.4 274.0 L407.4 281.9 L410.4 293.3 L413.8 302.4 L418.3 311.6 L422.9 302.4 L427.5 310.4 L433.1 302.4 L435.4 292.2 L438.8 284.7 L442.9 292.2 L445.2 303.6 L450.2 316.1 L458.0 320.7 L455.0 316.1 L459.6 311.6 L461.8 293.3 L466.4 288.8 L467.5 279.7 L472.1 276.9 L476.6 279.7 L478.9 289.9 L484.6 293.3 L489.2 302.4 L492.6 316.1 L497.1 319.5 L507.4 318.4 L516.5 309.3 L523.3 302.4 L521.1 293.3 L504.0 286.5 L502.8 270.6 L508.5 263.7 L516.5 266.0 L521.1 263.7 L523.3 288.8 L530.2 288.8 L531.3 263.7 L533.6 288.8 L555.2 289.9 L557.5 270.6 L546.1 266.0 L555.2 263.7 L562.1 270.6 L560.9 291.1 L546.1 297.9 L546.1 309.3 L555.2 318.4 L564.3 316.1 L573.5 311.6 L574.6 281.9 L579.1 263.7 L587.1 236.4 L595.1 263.7 L600.8 284.2 L605.3 316.1 L612.2 311.6 L619.0 300.2 L622.4 281.9 L623.6 234.1 L624.7 281.9 L629.3 274.0 L633.8 293.3 L641.8 302.4 L645.0 303.6 L643.0 326.0Z" fill="#3c4ab0" stroke="none" stroke-width="1" opacity="0.08"/>
<g filter="url(#b05)" opacity="0.9">
<path d="M278.9 225.0 L280.5 246.6 L282.1 247.8 L284.4 259.2 L283.0 274.0 L288.0 277.8 L287.6 292.4 L279.8 294.5 L278.3 300.2 L278.9 315.0 L277.1 325.2" fill="none" stroke="#aeb9ee" stroke-width="1.1" stroke-linejoin="round"/>
<path d="M281.7 225.0 L282.6 245.0 L290.3 247.3 L292.6 239.1 L296.5 237.5 L298.8 242.1 L299.4 231.8 L307.2 231.4 L307.2 242.8 L302.6 245.0 L302.2 256.9 L298.8 262.6 L297.2 278.5 L300.3 289.9 L305.6 301.3 L311.7 312.7 L316.3 323.4 L318.6 323.4 L318.6 301.3 L320.8 311.6 L327.7 302.4 L331.3 297.9 L331.8 279.7 L335.2 271.7 L339.8 263.7 L344.3 271.7 L348.2 279.7 L348.2 297.9 L353.4 300.2 L355.7 293.3 L357.3 280.8 L360.7 274.0 L364.8 280.8 L366.4 293.3 L369.4 284.2 L369.8 279.7 L371.0 291.1 L375.1 302.4 L380.8 304.7 L381.9 291.1 L386.5 286.5 L389.9 289.9 L392.1 278.5 L395.6 262.6 L399.0 278.5 L401.3 293.3 L403.5 281.9 L405.4 274.0 L407.4 281.9 L410.4 293.3 L413.8 302.4 L418.3 311.6 L422.9 302.4 L427.5 310.4 L433.1 302.4 L435.4 292.2 L438.8 284.7 L442.9 292.2 L445.2 303.6 L450.2 316.1 L458.0 320.7 L455.0 316.1 L459.6 311.6 L461.8 293.3 L466.4 288.8 L467.5 279.7 L472.1 276.9 L476.6 279.7 L478.9 289.9 L484.6 293.3 L489.2 302.4 L492.6 316.1 L497.1 319.5 L507.4 318.4 L516.5 309.3 L523.3 302.4 L521.1 293.3 L504.0 286.5 L502.8 270.6 L508.5 263.7 L516.5 266.0 L521.1 263.7 L523.3 288.8 L530.2 288.8 L531.3 263.7 L533.6 288.8 L555.2 289.9 L557.5 270.6 L546.1 266.0 L555.2 263.7 L562.1 270.6 L560.9 291.1 L546.1 297.9 L546.1 309.3 L555.2 318.4 L564.3 316.1 L573.5 311.6 L574.6 281.9 L579.1 263.7 L587.1 236.4 L595.1 263.7 L600.8 284.2 L605.3 316.1 L612.2 311.6 L619.0 300.2 L622.4 281.9 L623.6 234.1 L624.7 281.9 L629.3 274.0 L633.8 293.3 L641.8 302.4 L645.0 303.6" fill="none" stroke="#aeb9ee" stroke-width="1.1" stroke-linejoin="round"/>
<circle cx="294.9" cy="243.2" r="3.2" fill="none" stroke="#aeb9ee" stroke-width="1"/>
<path d="M339.8 258.9v6M338.0 260.6h3.6" fill="none" stroke="#dfe4ff" stroke-width="0.9" />
<path d="M360.7 269.2v6M358.9 270.9h3.6" fill="none" stroke="#dfe4ff" stroke-width="0.9" />
<path d="M369.8 277.2v6M368.0 278.9h3.6" fill="none" stroke="#dfe4ff" stroke-width="0.9" />
<path d="M395.6 257.8v6M393.8 259.5h3.6" fill="none" stroke="#dfe4ff" stroke-width="0.9" />
<path d="M405.4 270.8v6M403.6 272.5h3.6" fill="none" stroke="#dfe4ff" stroke-width="0.9" />
<path d="M438.8 280.6v6M437.0 282.3h3.6" fill="none" stroke="#dfe4ff" stroke-width="0.9" />
<path d="M629.3 266.9v6M627.5 268.6h3.6" fill="none" stroke="#dfe4ff" stroke-width="0.9" />
<path d="M615.6 292.0v6M613.8 293.7h3.6" fill="none" stroke="#dfe4ff" stroke-width="0.9" />
</g>
<ellipse cx="340.9" cy="288.8" rx="5.7" ry="5.7" fill="#eef1ff" opacity="0.8" filter="url(#b1)"/>
<ellipse cx="361.1" cy="287.1" rx="5.4" ry="8.5" fill="#eef1ff" opacity="0.85" filter="url(#b1)"/>
<ellipse cx="406.0" cy="295.6" rx="3.6" ry="4.6" fill="#eef1ff" opacity="0.7" filter="url(#b1)"/>
<ellipse cx="423.1" cy="302.2" rx="2.5" ry="3.9" fill="#eef1ff" opacity="0.85" filter="url(#b1)"/>
<ellipse cx="281.7" cy="295.0" rx="4.6" ry="5.1" fill="#eef1ff" opacity="0.6" filter="url(#b1)"/>
<ellipse cx="297.4" cy="271.7" rx="2.5" ry="12.5" fill="#eef1ff" opacity="0.45" filter="url(#b1)"/>
<ellipse cx="377.3" cy="291.6" rx="9.1" ry="1.7" fill="#eef1ff" opacity="0.4" filter="url(#b1)"/>
<ellipse cx="535.9" cy="302.4" rx="4.6" ry="1.6" fill="#eef1ff" opacity="0.8" filter="url(#b1)"/>
<ellipse cx="619.9" cy="295.0" rx="5.5" ry="5.1" fill="#eef1ff" opacity="0.6" filter="url(#b1)"/>
<ellipse cx="474.4" cy="297.3" rx="5.7" ry="4.0" fill="#eef1ff" opacity="0.35" filter="url(#b1)"/>
<ellipse cx="493.7" cy="317.3" rx="2.3" ry="2.3" fill="#eef1ff" opacity="0.5" filter="url(#b1)"/>
</g>
<g>
<defs><linearGradient id="lgr" x1="0" y1="0" x2="0" y2="1"><stop offset="0" stop-color="#f2cf55"/><stop offset="0.280" stop-color="#f6e6a6"/><stop offset="0.500" stop-color="#e4ecf8"/><stop offset="1" stop-color="#c5caea"/></linearGradient><clipPath id="lgc"><circle cx="303" cy="152.300" r="18.300"/></clipPath></defs>
<circle cx="303" cy="151.700" r="28.300" fill="#e3d06a"/>
<circle cx="303" cy="151.700" r="27.200" fill="#27349a"/>
<circle cx="303" cy="152.300" r="18.800" fill="url(#lgr)" stroke="#e3d06a" stroke-width="1"/>
<g clip-path="url(#lgc)">
<path d="M284 172v-19h4v-4h5v-7h6v10h3v-7h4v6h4v-4h5v8h4v-5h4v22z" fill="#7480bb" opacity="0.900"/>
<g fill="#22308f"><circle cx="298" cy="145.200" r="2.700"/><path d="M294 149.500h8l2 22h-12z"/><circle cx="308" cy="147.500" r="2.600"/><path d="M304 151.500h8l2.500 20h-12z"/></g>
<g fill="#f1f3fc"><circle cx="299" cy="155.300" r="2.100"/><path d="M297 158h4l2.500 14h-9z"/><circle cx="307.500" cy="155.300" r="2.100"/><path d="M305.500 158h4l2.500 14h-9z"/></g>
</g>
<path id="lg" d="M293.500 173.300a23.500 23.500 0 1 1 19 0" fill="none"/>
<text font-size="5" font-weight="bold" fill="#f5e374" stroke="#f5e374" stroke-width="0.350"><textPath href="#lg" textLength="126" lengthAdjust="spacingAndGlyphs">КИЇВСЬКИЙ МІСЬКИЙ ЦЕНТР СОЦІАЛЬНИХ СЛУЖБ</textPath></text>
<path d="M299.500 123.500h7v6.500c0 2-2 3.500-3.500 4.300c-1.500-.8-3.500-2.300-3.500-4.300z" fill="#2a55c0" stroke="#eedd6e" stroke-width="0.700"/>
<path d="M301.500 125.500v5.500M303 125v7M304.500 125.500v5.500M301.500 131h3" stroke="#f3e27a" stroke-width="0.600" fill="none"/>
<path d="M296 130c0-3 1-5 3-6M310 130c0-3-1-5-3-6" stroke="#e3d06a" stroke-width="1.400" fill="none"/>
</g>
<text x="346.00" y="142.43" font-size="11.8" fill="#c6cceb" font-weight="bold" textLength="223.50" lengthAdjust="spacingAndGlyphs" font-family='"Liberation Serif", serif' >Київський міський центр соціальних служб</text>
<text x="469.50" y="188.20" font-size="18.8" fill="#f4f5ff" font-weight="bold" text-anchor="middle" textLength="307.00" lengthAdjust="spacingAndGlyphs" >«Доступність до соціальних послуг</text>
<text x="469.50" y="211.60" font-size="18.8" fill="#f4f5ff" font-weight="bold" text-anchor="middle" textLength="196.00" lengthAdjust="spacingAndGlyphs" >та закладів соціальної</text>
<text x="469.50" y="235.30" font-size="18.8" fill="#f4f5ff" font-weight="bold" text-anchor="middle" textLength="299.00" lengthAdjust="spacingAndGlyphs" >інфраструктури як нова суспільна</text>
<text x="469.50" y="259.30" font-size="18.8" fill="#f4f5ff" font-weight="bold" text-anchor="middle" textLength="294.00" lengthAdjust="spacingAndGlyphs" >норма: досвід, теорія, практика»</text>
<text x="463.00" y="346.73" font-size="7.8" fill="#8f8f8f" text-anchor="middle" textLength="215.50" lengthAdjust="spacingAndGlyphs" >Лариса Остролуцька – методистка відділу методичного</text>
<text x="463.00" y="357.43" font-size="7.8" fill="#8f8f8f" text-anchor="middle" textLength="205.00" lengthAdjust="spacingAndGlyphs" >забезпечення соціальної роботи Київського міського</text>
<text x="463.00" y="366.93" font-size="7.8" fill="#8f8f8f" text-anchor="middle" textLength="164.00" lengthAdjust="spacingAndGlyphs" >центру соціальних служб,  канд. пед. наук</text>
<text x="463.00" y="379.73" font-size="7.8" fill="#8f8f8f" text-anchor="middle" textLength="42.00" lengthAdjust="spacingAndGlyphs" >Київ - 2025</text>
<rect x="799.00" y="114.50" width="9.00" height="255.50" fill="#e0e0e0" />
<rect x="799.00" y="362.80" width="9.00" height="7.00" fill="#fbfbfb" />
<path d="M801.90 365.75h3.00l-1.50 1.50z" fill="#555" stroke="none" stroke-width="1" />
<rect x="799.00" y="114.80" width="9.00" height="7.20" fill="#fbfbfb" />
<path d="M801.700 120l1.800-2l1.800 2z" fill="#555" stroke="none" stroke-width="1" />
<rect x="799.00" y="124.30" width="9.00" height="9.20" fill="#ffffff" />
<path d="M800.800 377.500l2 -1.800l2 1.800M800.800 375.300l2 -1.800l2 1.800M800.800 384.500l2 1.800l2 -1.800M800.800 386.700l2 1.800l2 -1.800" fill="none" stroke="#555" stroke-width="0.8" />
<line x1="800.80" y1="378.80" x2="804.80" y2="378.80" stroke="#555" stroke-width="0.7" />
<line x1="800.80" y1="383.30" x2="804.80" y2="383.30" stroke="#555" stroke-width="0.7" />
<line x1="118.00" y1="404.40" x2="808.00" y2="404.40" stroke="#c4c4c4" stroke-width="0.9" />
<text x="126.00" y="417.06" font-size="9.3" fill="#484848" textLength="291.00" lengthAdjust="spacingAndGlyphs" >Представитись, озвучити тему вебінару, скільки часу працюємо, запис…</text>
<path d="M250 418.300q1.500-1.500 3 0t3 0q1.500-1.500 3 0t3 0q1.500-1.500 3 0t3 0q1.500-1.500 3 0t3 0q1.500-1.500 3 0t3 0q1.500-1.500 3 0t3 0" fill="none" stroke="#d33" stroke-width="0.7" />
<rect x="-12.00" y="424.80" width="820.00" height="13.00" fill="#f1f1f1" />
<text x="-12.00" y="433.72" font-size="7.2" fill="#555" textLength="47.00" lengthAdjust="spacingAndGlyphs" >Слайд 1 з 101</text>
<g stroke="#777" fill="none" stroke-width="0.800"><rect x="47.500" y="427" width="6" height="7.500"/><path d="M50 433l5-5l1.500 1.500l-5 5z" fill="#f1f1f1"/></g>
<text x="65.00" y="433.72" font-size="7.2" fill="#555" textLength="35.00" lengthAdjust="spacingAndGlyphs" >українська</text>
<g stroke="#666" fill="none" stroke-width="0.900"><path d="M498 428.500h6M496.500 431h9M498 433.500h6"/></g>
<text x="508.00" y="433.72" font-size="7.2" fill="#444" textLength="27.00" lengthAdjust="spacingAndGlyphs" >Нотатки</text>
<path d="M546.500 427.500h7.500v5.500h-3l-1.500 2v-2h-3z" fill="#555" stroke="none" stroke-width="1" />
<text x="556.50" y="433.72" font-size="7.2" fill="#444" textLength="31.00" lengthAdjust="spacingAndGlyphs" >Примітки</text>
<rect x="600.00" y="425.00" width="21.00" height="13.00" fill="#d4d4d4" />
<g stroke="#777" fill="none" stroke-width="0.800"><rect x="606.500" y="427.500" width="8" height="7.500"/><path d="M608.500 430h4M608.500 432.500h4"/>
<rect x="628.500" y="427.500" width="2.800" height="2.800"/><rect x="633.200" y="427.500" width="2.800" height="2.800"/><rect x="628.500" y="432.200" width="2.800" height="2.800"/><rect x="633.200" y="432.200" width="2.800" height="2.800"/>
<rect x="652" y="427.500" width="3.500" height="7"/><rect x="656.500" y="427.500" width="3.500" height="7"/><path d="M653 430h1.500M657.500 430h1.500"/>
<path d="M673 427.500h8M674 428v4h6v-4M677 432v2.500M675.500 435h3"/></g>
<line x1="693.00" y1="431.20" x2="696.50" y2="431.20" stroke="#555" stroke-width="1" />
<line x1="701.00" y1="431.20" x2="767.00" y2="431.20" stroke="#9a9a9a" stroke-width="0.8" />
<line x1="733.50" y1="428.50" x2="733.50" y2="434.00" stroke="#9a9a9a" stroke-width="0.8" />
<rect x="716.20" y="427.70" width="2.00" height="7.00" fill="#555" />
<path d="M761.500 431.200h5M764 428.700v5" fill="none" stroke="#555" stroke-width="1.1" />
<text x="775.00" y="433.72" font-size="7.2" fill="#666" textLength="13.00" lengthAdjust="spacingAndGlyphs" >64%</text>
<g stroke="#666" fill="none" stroke-width="0.800"><rect x="796.500" y="427.500" width="8" height="7.500"/><path d="M798 429l1.500 1.500M803 429l-1.500 1.500M798 433.500l1.500-1.500M803 433.500l-1.500-1.500"/></g>
</g>
<path d="M314.500 26.500v11l2.500-2.400l1.800 4l1.600-.7l-1.800-3.900h3.400z" fill="#ffffff" stroke="#222" stroke-width="0.8" />
<g clip-path="url(#cam)">
<rect x="819.00" y="161.50" width="220.00" height="116.00" fill="#d8d9da" />
<g filter="url(#b1)">
<rect x="815.00" y="158.00" width="165.00" height="70.00" fill="url(#wallg)" />
<rect x="815.00" y="184.50" width="54.00" height="20.00" fill="#cbcccd" />
<rect x="955.00" y="158.00" width="20.00" height="124.00" fill="#d9d9d9" />
<rect x="974.50" y="158.00" width="56.00" height="124.00" fill="#ececec" />
<rect x="815.00" y="204.00" width="54.00" height="7.00" fill="#9a9b9d" />
<rect x="815.00" y="210.00" width="54.00" height="14.00" fill="#c4c4c2" />
<rect x="817.00" y="210.00" width="10.00" height="14.00" fill="#9fb3a6" />
<rect x="830.00" y="214.00" width="15.00" height="10.00" fill="#a9313b" />
<rect x="846.00" y="216.00" width="19.00" height="8.00" fill="#5f5d63" />
<rect x="815.00" y="224.00" width="54.00" height="42.00" fill="#ccb594" />
<rect x="834.50" y="227.00" width="32.00" height="36.00" fill="#b59a76" />
<rect x="838.00" y="231.00" width="27.00" height="20.00" fill="#d3c0a0" />
<rect x="840.00" y="246.50" width="3.00" height="3.00" fill="#7c6a55" />
<rect x="845.00" y="246.50" width="3.00" height="3.00" fill="#7c6a55" />
<rect x="850.00" y="246.50" width="3.00" height="3.00" fill="#7c6a55" />
<rect x="855.00" y="246.50" width="3.00" height="3.00" fill="#7c6a55" />
<rect x="860.00" y="246.50" width="3.00" height="3.00" fill="#7c6a55" />
<rect x="836.00" y="252.00" width="30.00" height="12.00" fill="#4e443c" />
<rect x="950.00" y="226.00" width="26.00" height="40.00" fill="#b8693a" />
<rect x="963.00" y="203.00" width="10.50" height="23.00" fill="#b8344a" />
<rect x="966.00" y="197.00" width="8.00" height="12.00" fill="#d8893a" />
<rect x="948.00" y="190.00" width="5.50" height="15.00" fill="#8a7a3c" />
<rect x="956.00" y="215.00" width="8.00" height="10.00" fill="#e6e6e6" />
</g>
<g filter="url(#b05)">
<path d="M975.8 185.8 L986.4 176.5 L989.0 201.7 L979.2 211.0Z" fill="#2a2a2c"/>
<path d="M978.0 188.4 L985.2 182.1 L987.0 199.2 L980.3 205.5Z" fill="#6f6f72"/>
<path d="M990.3 162.0 L1005.7 160.6 L1006.8 177.9 L994.3 189.8Z" fill="#2a2a2c"/>
<path d="M993.2 165.4 L1003.7 164.5 L1004.4 176.2 L995.9 184.3Z" fill="#6f6f72"/>
<path d="M993.8 205.7 L1009.4 187.1 L1012.9 220.3 L997.8 230.9Z" fill="#2a2a2c"/>
<path d="M996.9 207.4 L1007.5 194.8 L1009.9 217.3 L999.6 224.5Z" fill="#6f6f72"/>
<path d="M980.3 222.9 L990.3 212.3 L993.0 234.8 L982.4 244.1Z" fill="#2a2a2c"/>
<path d="M982.3 224.7 L989.1 217.5 L990.9 232.8 L983.7 239.1Z" fill="#6f6f72"/>
<path d="M1016.8 171.2 L1024.8 163.3 L1024.8 204.4 L1019.5 197.7Z" fill="#2a2a2c"/>
<path d="M1018.3 175.4 L1023.7 170.0 L1023.7 197.9 L1020.1 193.4Z" fill="#6f6f72"/>
<rect x="978.00" y="243.50" width="50.00" height="2.50" fill="#8d9093" />
<rect x="980.00" y="246.00" width="48.00" height="8.00" fill="#c6c8c9" />
<path d="M995 262c4-12 14-16 30-15v32h-32z" fill="#232325" stroke="none" stroke-width="1" />
<rect x="978.00" y="254.00" width="16.00" height="26.00" fill="#aeb0b2" />
</g>
<g filter="url(#b1)">
<path d="M858 282c3-14 10-20 22-22h60c12 2 22 8 26 22z" fill="#4a2228"/>
<path d="M869 264L867.500 230C866 205 876 184 893 178C900 174.500 910 173.500 918 174.500C935 177 947 190 953 212C957 228 957 245 951 257L948 266L869 266Z" fill="#211c1f"/>
<path d="M880 264C875.500 248 875 226 878 211C886 206 899 204 910 204C924 203.500 935 207 939.500 214C942 230 939 250 931 264Z" fill="#c8a198"/>
<path d="M939.500 214C942 230 939 250 931 264L922 264C932 250 935 230 933 212Z" fill="#a87f78" opacity="0.600"/>
<ellipse cx="905" cy="234" rx="22" ry="15" fill="#dab8af" opacity="0.750"/>
<ellipse cx="896" cy="211" rx="14" ry="4" fill="#d4b0a6" opacity="0.600"/>
<path d="M874 216C878 205 890 199 906 200C920 198 936 203 941 216C936 209 924 207 913 208.500C908 204 903 205 900 208.500C890 207 880 210 874 216Z" fill="#231d21"/>
</g>
<g filter="url(#b05)">
<path d="M880 216.500q6-3.500 13-1" stroke="#4a3633" stroke-width="1.400" fill="none"/><path d="M908 212.500q7-3.500 14 0" stroke="#4a3633" stroke-width="1.400" fill="none"/>
<ellipse cx="886.500" cy="220.500" rx="4.500" ry="1.700" fill="#54403f"/><ellipse cx="914.500" cy="217" rx="5" ry="1.800" fill="#54403f"/>
<ellipse cx="887" cy="224.500" rx="6" ry="2" fill="#b58c84" opacity="0.700"/><ellipse cx="916" cy="221.500" rx="6.500" ry="2" fill="#b58c84" opacity="0.700"/>
<path d="M895 237q5 3.500 10 .5" stroke="#a67a70" stroke-width="1.800" fill="none"/>
<ellipse cx="902.500" cy="253" rx="8.500" ry="2.400" fill="#b2404a"/>
</g>
<rect x="819" y="259.500" width="201" height="18.500" rx="2" fill="#1a1a1a" opacity="0.800"/>
<rect x="822.00" y="270.50" width="2.30" height="3.50" fill="#ffffff" />
<rect x="825.40" y="268.00" width="2.30" height="6.00" fill="#ffffff" />
<rect x="828.80" y="265.50" width="2.30" height="8.50" fill="#ffffff" />
<rect x="832.20" y="263.00" width="2.30" height="11.00" fill="#ffffff" />
<text x="839.50" y="273.00" font-size="12.2" fill="#f2f2f2" textLength="177.00" lengthAdjust="spacingAndGlyphs" >Київський міський центр соціа...</text>
</g>
</g>
</svg></body></html>
